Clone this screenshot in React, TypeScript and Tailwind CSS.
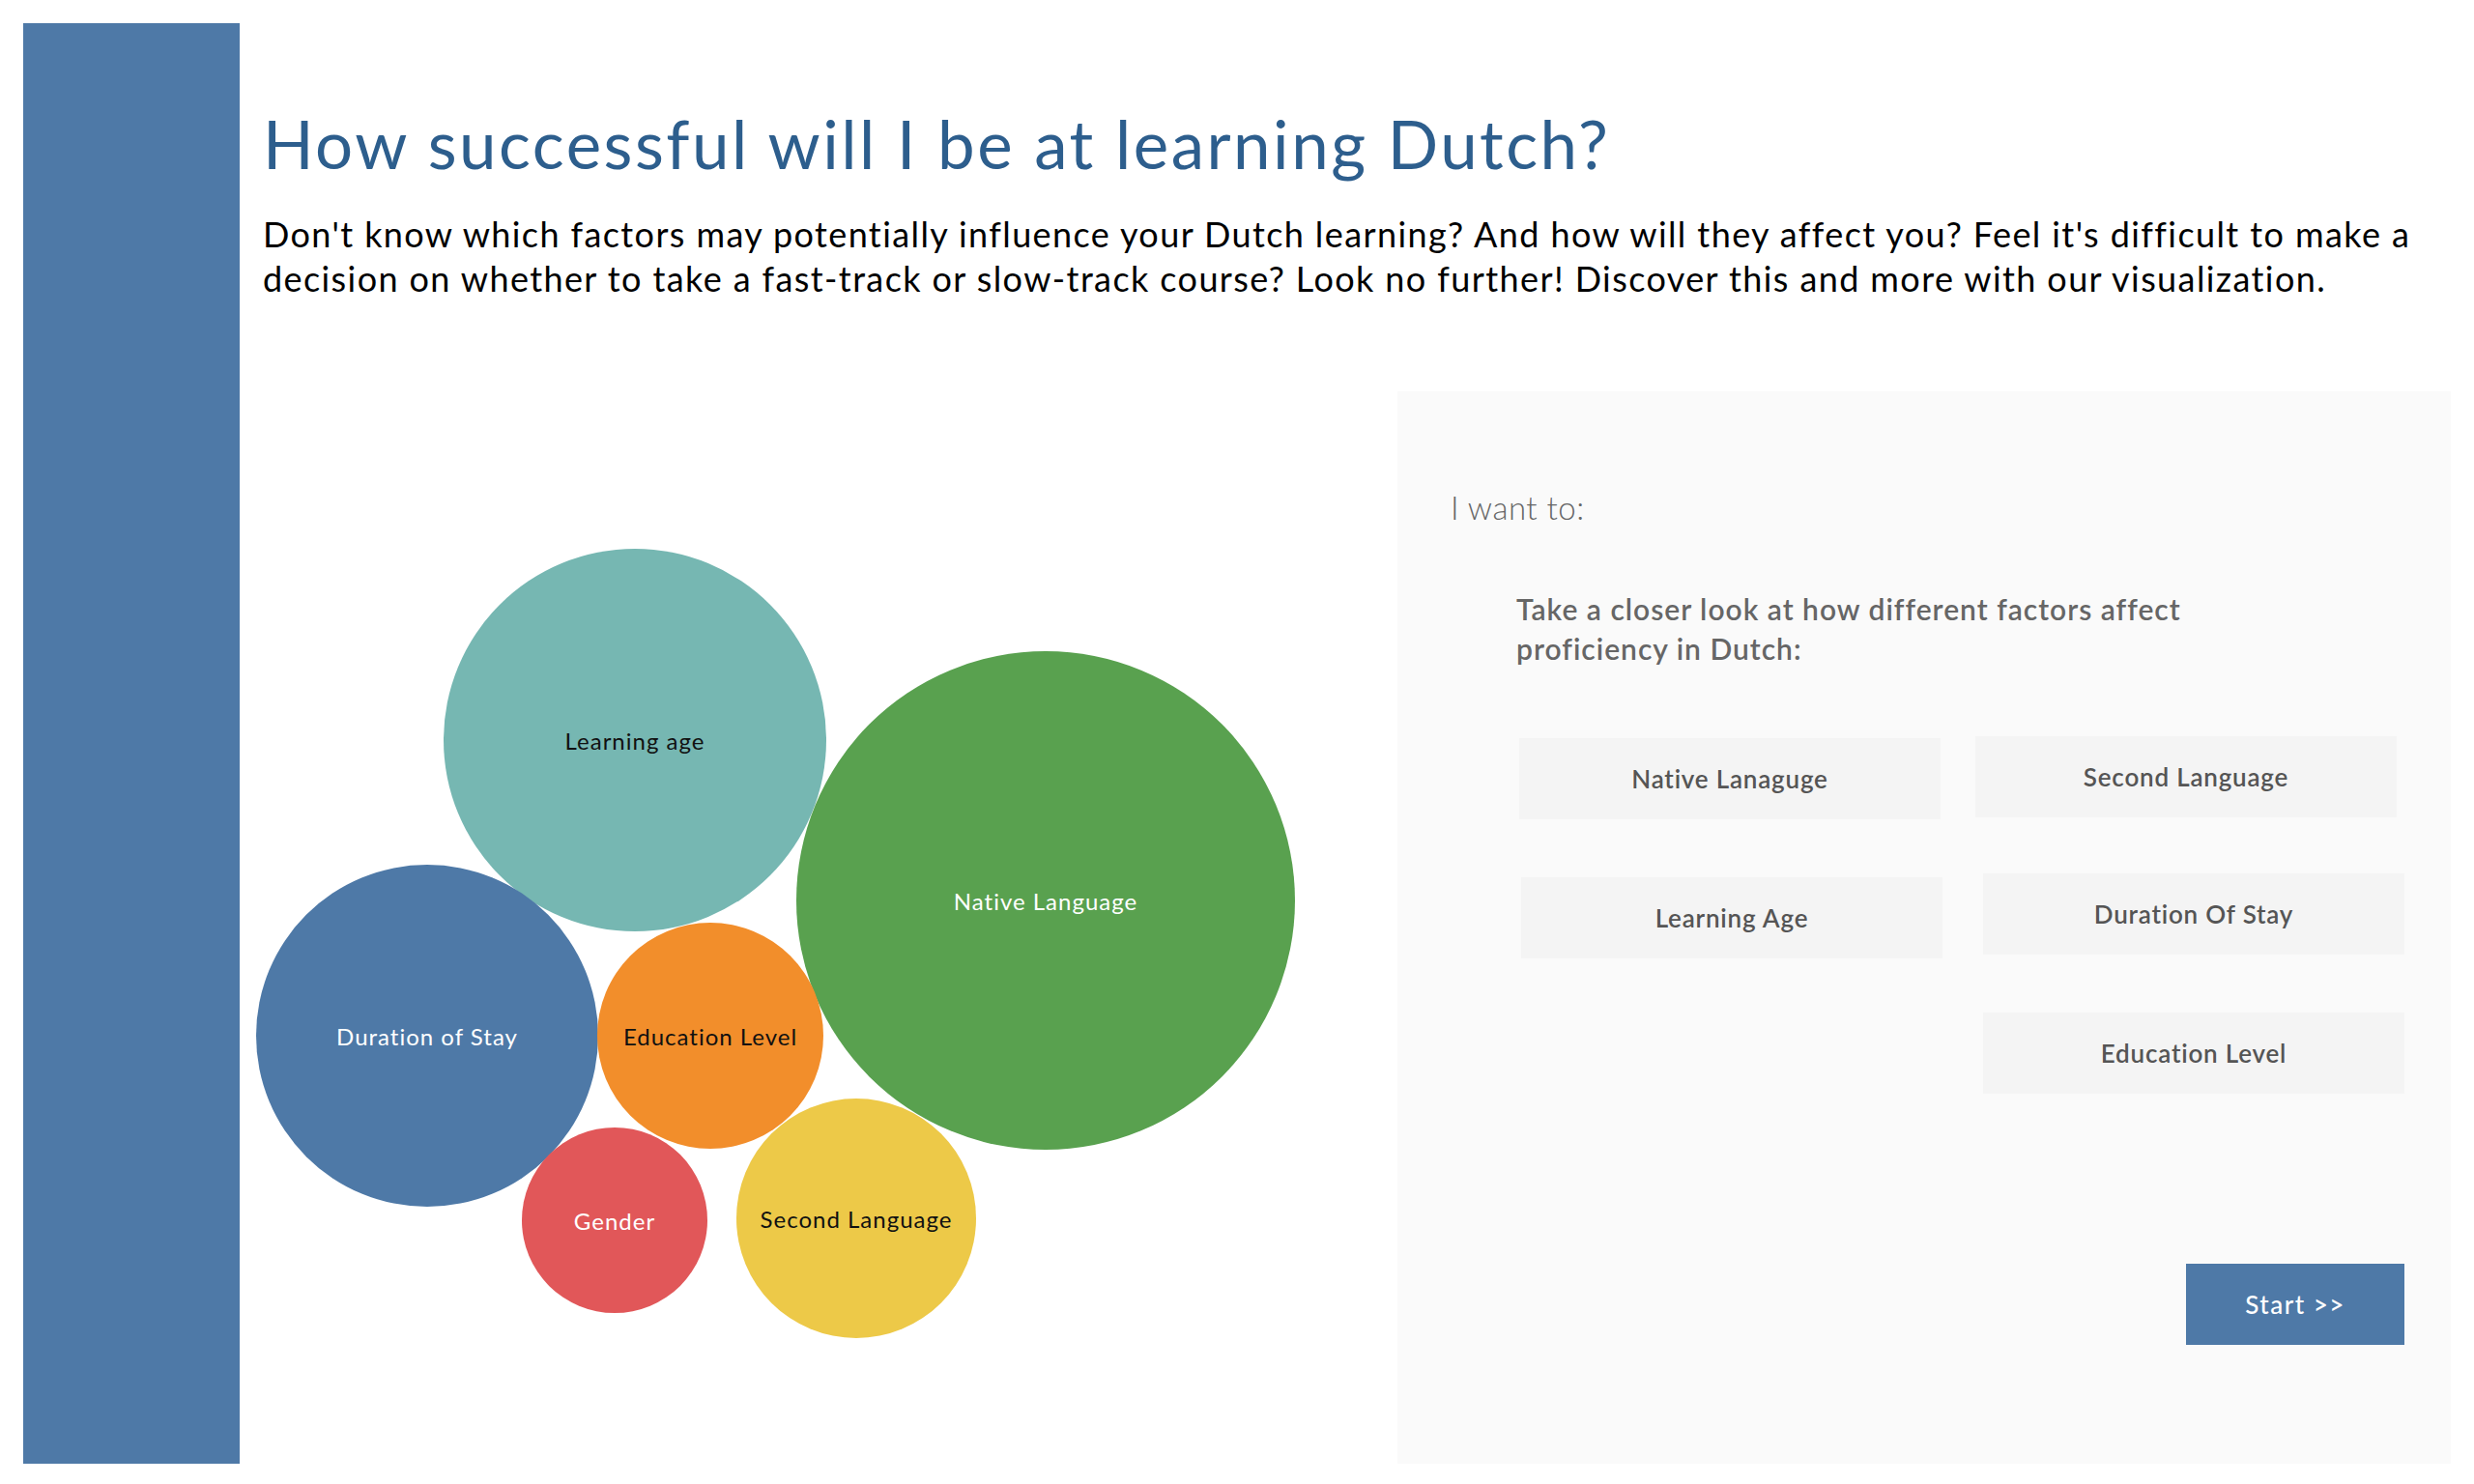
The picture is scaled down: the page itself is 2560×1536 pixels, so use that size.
import React from "react";

const circles = [
  { cx: 657, cy: 766, r: 198, fill: "#76b7b2", label: "Learning age", color: "#111111" },
  { cx: 1082, cy: 932, r: 258, fill: "#59a14f", label: "Native Language", color: "#ffffff" },
  { cx: 442, cy: 1072, r: 177, fill: "#4e79a7", label: "Duration of Stay", color: "#ffffff" },
  { cx: 735, cy: 1072, r: 117, fill: "#f28e2b", label: "Education Level", color: "#111111" },
  { cx: 636, cy: 1263, r: 96, fill: "#e15759", label: "Gender", color: "#ffffff" },
  { cx: 886, cy: 1261, r: 124, fill: "#edc948", label: "Second Language", color: "#111111" },
];

const btn =
  "w-[436px] h-[84px] bg-[#f4f4f4] flex items-center justify-center text-[26px] tracking-[0.8px] font-semibold text-[#555555]";

export default function App() {
  return (
    <div
      className="w-[2560px] h-[1536px] bg-white flex pt-[24px] pl-[24px] pr-[24px] pb-[21px]"
      style={{ fontFamily: "Lato, 'Open Sans', sans-serif" }}
    >
      <div className="w-[224px] shrink-0 bg-[#4e79a7]" />
      <div className="flex-1 ml-[24px] flex flex-col">
        <h1 className="pt-[83px] text-[69px] leading-[84px] tracking-[2.5px] text-[#2d5e8d] font-normal whitespace-nowrap">
          How successful will I be at learning Dutch?
        </h1>
        <p className="mt-[28px] text-[36px] leading-[46px] tracking-[1.4px] text-black whitespace-nowrap">
          Don't know which factors may potentially influence your Dutch learning? And how will they affect you? Feel it's difficult to make a
          <br />
          decision on whether to take a fast-track or slow-track course? Look no further! Discover this and more with our visualization.
        </p>
        <div className="mt-[94px] flex flex-1">
          <svg
            width="1174"
            height="1110"
            viewBox="272 405 1174 1110"
            className="shrink-0 overflow-visible"
          >
            {circles.map((c) => (
              <g key={c.label}>
                <circle cx={c.cx} cy={c.cy} r={c.r} fill={c.fill} />
                <text
                  x={c.cx}
                  y={c.cy}
                  textAnchor="middle"
                  dominantBaseline="central"
                  fontSize="24"
                  letterSpacing="1"
                  fill={c.color}
                  fontFamily="Lato, 'Open Sans', sans-serif"
                >
                  {c.label}
                </text>
              </g>
            ))}
          </svg>
          <div className="w-[1090px] shrink-0 bg-[#fafafa] flex flex-col">
            <div className="pt-[100px] pl-[55px] text-[33px] leading-[40px] tracking-[0.5px] font-light text-[#666666]">
              I want to:
            </div>
            <div className="mt-[65px] pl-[123px] text-[30px] leading-[41px] tracking-[1px] font-semibold text-[#666666] whitespace-nowrap">
              Take a closer look at how different factors affect
              <br />
              proficiency in Dutch:
            </div>
            <div className="mt-[70px] flex items-start">
              <div className={`${btn} ml-[126px] mt-[2px]`}>Native Lanaguge</div>
              <div className={`${btn} ml-[36px]`}>Second Language</div>
            </div>
            <div className="mt-[56px] flex items-start">
              <div className={`${btn} ml-[128px] mt-[4px]`}>Learning Age</div>
              <div className={`${btn} ml-[42px]`}>Duration Of Stay</div>
            </div>
            <div className="mt-[56px] flex items-start">
              <div className={`${btn} ml-[606px]`}>Education Level</div>
            </div>
            <div className="mt-[176px] flex justify-end pr-[48px]">
              <div className="w-[226px] h-[84px] bg-[#4e79a7] flex items-center justify-center text-[26px] tracking-[1.5px] font-medium text-white">
                Start &gt;&gt;
              </div>
            </div>
          </div>
        </div>
      </div>
    </div>
  );
}
